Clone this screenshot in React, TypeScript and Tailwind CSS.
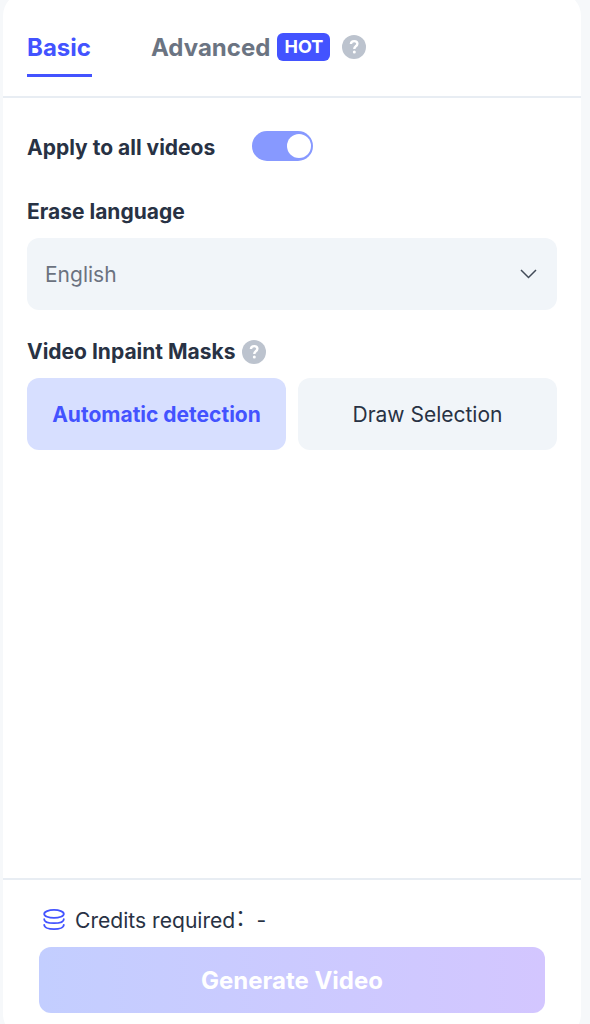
import { useState } from "react";

function HelpIcon() {
	return (
		<svg viewBox="0 0 24 24" fill="none" className="w-6 h-6 shrink-0" aria-hidden="true">
			<circle cx="12" cy="12" r="12" fill="#bcc3ce" />
			<path
				d="M8.9 9C9 7.2 10.3 6.1 12.2 6.1C14.1 6.1 15.4 7.2 15.4 8.8C15.4 10.1 14.6 10.8 13.6 11.4C12.6 12.1 12.3 12.5 12.3 13.9"
				stroke="white"
				strokeWidth="2.4"
			/>
			<circle cx="12.3" cy="16.9" r="1.5" fill="white" />
		</svg>
	);
}

function CreditsIcon() {
	return (
		<svg
			viewBox="0 0 24 24"
			fill="none"
			stroke="#4353ff"
			strokeWidth="1.8"
			strokeLinecap="round"
			className="w-6 h-6"
			aria-hidden="true"
		>
			<ellipse cx="12" cy="5.9" rx="9.8" ry="4" />
			<path d="M2.2 11.2C2.2 13.7 6.5 15.2 12 15.2S21.8 13.7 21.8 11.2" />
			<path d="M2.2 16.8C2.2 19.5 6.5 21.2 12 21.2S21.8 19.5 21.8 16.8" />
		</svg>
	);
}

export default function App() {
	const [applyAll, setApplyAll] = useState(true);
	const [mask, setMask] = useState("Automatic detection");

	const masks = ["Automatic detection", "Draw Selection"];

	return (
		<div className="h-screen overflow-hidden bg-[#f6f8fa] pl-[3px] pr-[9px] font-['Inter','Noto_Sans_CJK_SC',sans-serif] text-[#283244]">
			<div className="-mt-2 h-[1046px] rounded-3xl bg-white flex flex-col">
				{/* Tabs */}
				<header className="h-[106px] shrink-0 border-b-2 border-[#e8edf3] px-6 pt-10 flex items-start">
					<button className="h-[45px] w-[65px] border-b-3 border-[#4353ff] pb-2.5 text-left text-2xl leading-[30px] font-bold text-[#4353ff]">
						Basic
					</button>
					<button className="ml-[59px] flex items-start text-2xl leading-[30px] font-bold text-[#6b7482]">
						<span className="pt-px">Advanced</span>
						<span className="ml-[7px] mt-px h-7 w-[53px] rounded-md bg-[#4353ff] text-lg leading-7 font-bold text-white text-center">
							HOT
						</span>
					</button>
					<span className="ml-3 mt-[3px]">
						<HelpIcon />
					</span>
				</header>

				{/* Settings */}
				<main className="flex-1 px-6 pt-[33px]">
					<div className="flex items-center h-[30px]">
						<span className="w-[225px] pt-[3px] text-[21px] font-bold">Apply to all videos</span>
						<button
							role="switch"
							aria-checked={applyAll}
							onClick={() => setApplyAll(!applyAll)}
							className={`flex w-[61px] h-[30px] rounded-full p-[3px] pr-0.5 ${applyAll ? "justify-end bg-[#8799ff]" : "bg-gray-300"}`}
						>
							<span className="w-6 h-6 rounded-full bg-white" />
						</button>
					</div>

					<h2 className="mt-[35px] text-[21px] leading-8 font-bold">Erase language</h2>
					<button className="mt-2.5 w-[530px] h-[72px] rounded-xl bg-[#f1f5f9] pl-[18px] pr-5 flex items-center justify-between text-[21px] text-[#6b7280]">
						<span className="pt-0.5">English</span>
						<svg viewBox="0 0 17 10" fill="none" className="w-[17px] h-2.5" aria-hidden="true">
							<path d="M1 1L8.5 8.5L16 1" stroke="#424b59" strokeWidth="1.5" />
						</svg>
					</button>

					<div className="mt-[25px] h-8 flex items-center gap-[7px]">
						<h2 className="pt-0.5 text-[21px] font-bold">Video Inpaint Masks</h2>
						<span className="pt-0.5">
							<HelpIcon />
						</span>
					</div>
					<div className="mt-[11px] w-[530px] grid grid-cols-2 gap-3">
						{masks.map((m) => (
							<button
								key={m}
								onClick={() => setMask(m)}
								className={`h-[72px] rounded-xl pt-0.5 text-[21px] ${m === mask ? "bg-[#d7dfff] font-bold text-[#4353ff]" : "bg-[#f1f5f9]"}`}
							>
								{m}
							</button>
						))}
					</div>
				</main>

				{/* Footer */}
				<footer className="h-40 shrink-0 border-t-2 border-[#e8edf3] px-9 pt-6">
					<div className="h-8 pl-[3px] flex items-center text-[21.1px]">
						<CreditsIcon />
						<span className="ml-[9px] pt-0.5">
							Credits required<span className="inline-block -translate-y-[3px]">：</span>-
						</span>
					</div>
					<button className="mt-[11px] w-[506px] h-[66px] rounded-xl bg-linear-to-r from-[#c3ceff] to-[#d3c6ff] pt-0.5 text-2xl font-bold text-white">
						Generate Video
					</button>
				</footer>
			</div>
		</div>
	);
}
